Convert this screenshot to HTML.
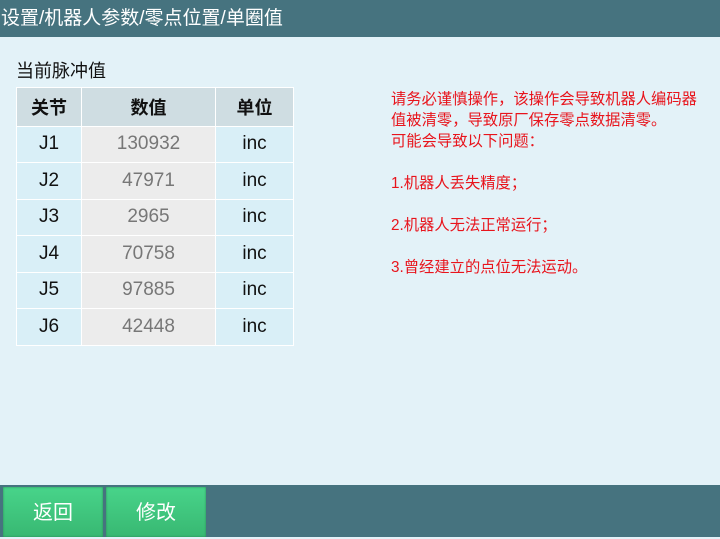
<!DOCTYPE html><html><head><style>
body{margin:0;width:720px;height:537px;background:#e3f2f8;font-family:"Liberation Sans","Noto Sans CJK SC",sans-serif;position:relative;overflow:hidden}
.hd{position:absolute;left:0;top:0;width:720px;height:37px;background:#46737f;color:#fff;font-size:19px;line-height:37px;padding-left:1px}
.t{position:absolute;left:16px;top:57px;font-size:18px;color:#111}
table{position:absolute;left:16px;top:87px;border-collapse:collapse}
td{border:1px solid #fff;height:35.5px;text-align:center;font-size:19px;padding:0}
th{border:1px solid #fff;height:35.5px;background:#cfdde2;font-size:18px;font-weight:bold;color:#111}
.a{width:64px;background:#d9eff7;color:#111}.b{width:133px;background:#ececec;color:#777}.c{width:77px;background:#d9eff7;color:#111}
.w{position:absolute;left:391px;top:89px;color:#e8141c;font-size:15.3px;line-height:21px}
.ft{position:absolute;left:0;top:485px;width:720px;height:52px;background:#46737f}
.bt{position:absolute;top:487px;width:100px;height:50px;background:linear-gradient(#48d48a,#38b872);color:#fff;font-size:20px;line-height:52px;text-align:center;box-shadow:inset 0 0 2px #2a8a56}
</style></head><body>
<div class="hd">设置/机器人参数/零点位置/单圈值</div>
<div class="t">当前脉冲值</div>
<table>
<tr><th>关节</th><th>数值</th><th>单位</th></tr>
<tr><td class="a">J1</td><td class="b">130932</td><td class="c">inc</td></tr>
<tr><td class="a">J2</td><td class="b">47971</td><td class="c">inc</td></tr>
<tr><td class="a">J3</td><td class="b">2965</td><td class="c">inc</td></tr>
<tr><td class="a">J4</td><td class="b">70758</td><td class="c">inc</td></tr>
<tr><td class="a">J5</td><td class="b">97885</td><td class="c">inc</td></tr>
<tr><td class="a">J6</td><td class="b">42448</td><td class="c">inc</td></tr>
</table>
<div class="w">请务必谨慎操作，该操作会导致机器人编码器<br>值被清零，导致原厂保存零点数据清零。<br>可能会导致以下问题：<br><br>1.机器人丢失精度；<br><br>2.机器人无法正常运行；<br><br>3.曾经建立的点位无法运动。</div>
<div class="ft"></div>
<div class="bt" style="left:3px">返回</div>
<div class="bt" style="left:106px">修改</div>
</body></html>
